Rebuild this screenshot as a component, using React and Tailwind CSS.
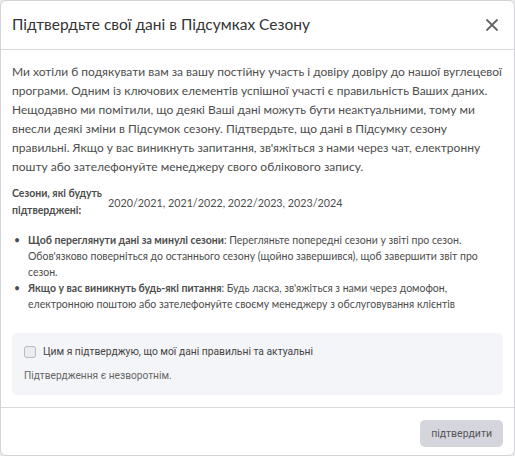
export default function App() {
  return (
    <div className="w-[515px] h-[456px] bg-[#e9e9ec]" style={{ fontFamily: "Lato, 'Noto Sans', sans-serif" }}>
      <div className="w-full h-full bg-white border border-[#d4d4d8] rounded-[6px] flex flex-col overflow-hidden">
        <div className="h-[49px] flex items-center justify-between pl-[11px] pr-[16px] border-b border-[#d9d9dd] shrink-0">
          <h1 className="text-[15.5px] text-[#333333] font-normal">Підтвердьте свої дані в Підсумках Сезону</h1>
          <svg width="12" height="12" viewBox="0 0 12 12" className="text-[#666]">
            <path d="M1 1 L11 11 M11 1 L1 11" stroke="currentColor" strokeWidth="1.8" strokeLinecap="round" />
          </svg>
        </div>
        <div className="px-[11px] pt-[12px] pb-[12px] text-[#4d4d4d]">
          <p className="text-[12px] leading-[19px]">
            Ми хотіли б подякувати вам за вашу постійну участь і довіру довіру до нашої вуглецевої програми. Одним із ключових елементів успішної участі є правильність Ваших даних. Нещодавно ми помітили, що деякі Ваші дані можуть бути неактуальними, тому ми внесли деякі зміни в Підсумок сезону. Підтвердьте, що дані в Підсумку сезону правильні. Якщо у вас виникнуть запитання, зв'яжіться з нами через чат, електронну пошту або зателефонуйте менеджеру свого облікового запису.
          </p>
          <div className="flex items-center mt-[9px]">
            <div className="w-[96px] text-[10.5px] leading-[17px] font-bold text-[#4d4d4d]">Сезони, які будуть підтверджені:</div>
            <div className="text-[10.75px] leading-[17px]">2020/2021, 2021/2022, 2022/2023, 2023/2024</div>
          </div>
          <ul className="mt-[13px] text-[10.5px] leading-[16px] flex flex-col">
            <li className="flex">
              <span className="w-[16px] shrink-0 pl-[2px]">•</span>
              <span><b>Щоб переглянути дані за минулі сезони</b>: Перегляньте попередні сезони у звіті про сезон. Обов'язково поверніться до останнього сезону (щойно завершився), щоб завершити звіт про сезон.</span>
            </li>
            <li className="flex">
              <span className="w-[16px] shrink-0 pl-[2px]">•</span>
              <span><b>Якщо у вас виникнуть будь-які питання</b>: Будь ласка, зв'яжіться з нами через домофон, електронною поштою або зателефонуйте своєму менеджеру з обслуговування клієнтів</span>
            </li>
          </ul>
          <div className="mt-[21px] bg-[#f4f5f8] rounded-[5px] px-[12px] pt-[11px] pb-[12px]" style={{ fontFamily: "Roboto, sans-serif" }}>
            <label className="flex items-center gap-[7px] text-[10.3px] leading-[16px] text-[#444]">
              <span className="w-[12px] h-[12px] rounded-[3px] border border-[#b8b8c0] bg-[#ececf1]"></span>
              Цим я підтверджую, що мої дані правильні та актуальні
            </label>
            <div className="mt-[9px] text-[10.2px] leading-[14px] text-[#666]">Підтвердження є незворотнім.</div>
          </div>
        </div>
        <div className="flex-1 border-t border-[#d9d9dd] flex items-start justify-end pt-[12px] pr-[11px]">
          <button className="h-[27px] px-[11px] rounded-[5px] bg-[#d5d5de] text-[10.5px] text-[#555]" style={{ fontFamily: "Roboto, sans-serif" }}>підтвердити</button>
        </div>
      </div>
    </div>
  );
}
